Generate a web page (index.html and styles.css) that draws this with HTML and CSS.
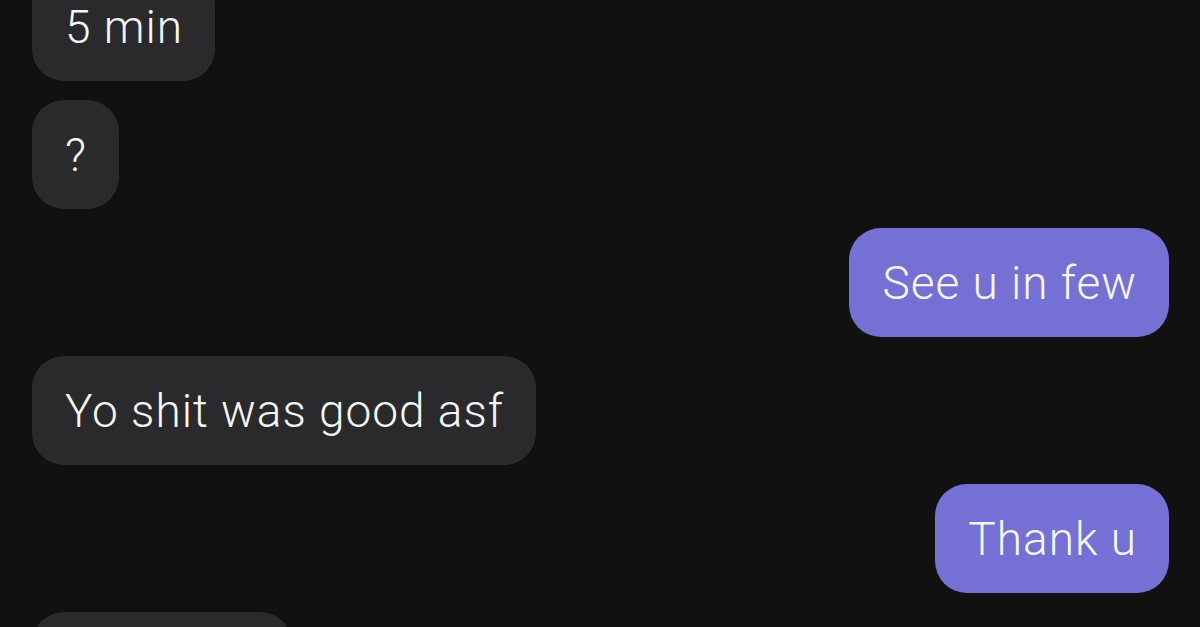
FILE: index.html
```html
<!DOCTYPE html>
<html lang="en">
<head>
<meta charset="utf-8">
<title>Messages</title>
<link rel="stylesheet" href="styles.css">
</head>
<body>
<main class="thread">
  <div class="bubble in">5 min</div>
  <div class="bubble in">?</div>
  <div class="bubble out">See u in few</div>
  <div class="bubble in">Yo shit was good asf</div>
  <div class="bubble out">Thank u</div>
  <div class="bubble in partial"></div>
</main>
</body>
</html>
```
FILE: styles.css
```css
html, body {
  margin: 0;
  padding: 0;
  background: #111112;
  overflow: hidden;
}
body {
  height: 627px;
  font-family: Roboto, "Noto Sans", sans-serif;
}
.thread {
  display: flex;
  flex-direction: column;
  gap: 19px;
  padding: 0 31px 0 32px;
  margin-top: -28px;
}
.bubble {
  box-sizing: border-box;
  height: 109px;
  display: flex;
  align-items: center;
  padding: 0 32px 0 33px;
  border-radius: 32px;
  font-size: 46px;
  font-weight: 300;
  letter-spacing: 1px;
  color: #f6f6f8;
  white-space: nowrap;
}
.in {
  align-self: flex-start;
  background: #2a2a2c;
}
.out {
  align-self: flex-end;
  background: #7570d4;
}
.partial {
  width: 260px;
}
```
